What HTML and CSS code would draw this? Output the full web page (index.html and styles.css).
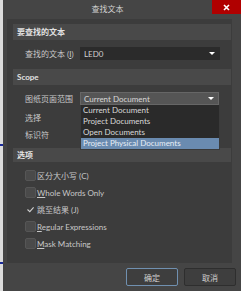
FILE: index.html
```html
<!DOCTYPE html>
<html>
<head>
<meta charset="utf-8">
<link rel="stylesheet" href="styles.css">
</head>
<body>
<div class="screen">
  <div class="strip"><i class="mark m1"></i><i class="mark m2"></i></div>
  <div class="dialog">
    <div class="titlebar">
      <span class="title">查找文本</span>
      <span class="close"><svg width="7" height="7" viewBox="0 0 7 7"><path d="M1 1L6 6M6 1L1 6" stroke="#fff" stroke-width="1.6"/></svg></span>
    </div>
    <div class="panel">
      <div class="band">要查找的文本</div>
      <div class="row r-find">
        <span class="label">查找的文本 (<u>I</u>)</span>
        <div class="combo dark"><span>LED0</span><i class="arrow"></i></div>
      </div>
      <div class="band">Scope</div>
      <div class="row r-scope">
        <span class="label">图纸页面范围</span>
        <div class="combo-wrap">
          <div class="combo light"><span>Current Document</span><i class="arrow"></i></div>
          <ul class="list">
            <li>Current Document</li>
            <li>Project Documents</li>
            <li>Open Documents</li>
            <li class="sel">Project Physical Documents</li>
          </ul>
        </div>
      </div>
      <div class="row r-plain first"><span class="label">选择</span></div>
      <div class="row r-plain"><span class="label">标识符</span></div>
      <div class="band b3">选项</div>
      <div class="checks">
        <div class="check"><i class="box"></i><span>区分大小写 (C)</span></div>
        <div class="check"><i class="box"></i><span><u>W</u>hole Words Only</span></div>
        <div class="check"><i class="box on"><svg width="9" height="9" viewBox="0 0 9 9"><path d="M1.5 4.5L3.8 6.6L7.6 2.4" fill="none" stroke="#d0d0d0" stroke-width="1.1"/></svg></i><span>跳至结果 (J)</span></div>
        <div class="check"><i class="box"></i><span><u>R</u>egular Expressions</span></div>
        <div class="check"><i class="box"></i><span><u>M</u>ask Matching</span></div>
      </div>
    </div>
    <div class="buttons">
      <span class="btn default">确定</span>
      <span class="btn">取消</span>
    </div>
  </div>
</div>
</body>
</html>
```
FILE: styles.css
```css
html, body {
  margin: 0;
  padding: 0;
  background: #444444;
}
body {
  font-family: Lato, "Noto Sans CJK SC", sans-serif;
  font-size: 8px;
  color: #c8c8c8;
}
.screen {
  display: flex;
  width: 241px;
  height: 291px;
  overflow: hidden;
}
.strip {
  width: 3px;
  flex: none;
  background: #dcdcdc;
  display: flex;
  flex-direction: column;
}
.mark {
  display: block;
  height: 2px;
  background: #1a2a9a;
}
.m1 { margin-top: 144px; }
.m2 { margin-top: 116px; }
.dialog {
  flex: 1;
  display: flex;
  flex-direction: column;
  background: #454545;
}
.titlebar {
  height: 19px;
  display: flex;
  align-items: flex-start;
}
.title {
  flex: 1;
  text-align: center;
  line-height: 19px;
  color: #d0d0d0;
}
.close {
  width: 29px;
  height: 14px;
  background: #b00000;
  display: flex;
  align-items: center;
  justify-content: center;
}
.close svg { display: block; }
.panel {
  margin: 0 9px 0 4px;
  background: #3c3c3c;
  padding: 5px 1px 11px 6px;
  position: relative;
}
.band {
  height: 16px;
  line-height: 16px;
  background: #494949;
  padding-left: 4px;
  font-weight: bold;
  color: #e2e2e2;
}
.row {
  display: flex;
  align-items: center;
  padding-left: 12px;
}
.label {
  width: 55px;
  flex: none;
  white-space: nowrap;
}
.r-find { height: 13px; margin: 7px 0 9px; }
.r-scope { height: 13px; margin-top: 7px; }
.combo-wrap {
  position: relative;
  width: 140px;
}
.combo {
  width: 140px;
  height: 13px;
  box-sizing: border-box;
  display: flex;
  align-items: center;
  justify-content: space-between;
  padding: 0 4px 0 3px;
}
.combo.dark {
  background: #2b2b2b;
  border: 1px solid #2b2b2b;
  color: #d0d0d0;
}
.combo.light {
  width: 139px;
  background: #555555;
  border: 1px solid #666666;
  color: #d8d8d8;
}
.arrow {
  width: 0;
  height: 0;
  border-left: 3px solid transparent;
  border-right: 3px solid transparent;
  border-top: 3px solid #ffffff;
}
.list {
  position: absolute;
  left: 0;
  top: 13px;
  width: 140px;
  box-sizing: border-box;
  margin: 0;
  padding: 0;
  list-style: none;
  background: #2a2a2a;
  border: 1px solid #3a3a3a;
  border-top: none;
  z-index: 2;
}
.list li {
  height: 11px;
  line-height: 11px;
  padding-left: 2px;
  color: #d8d8d8;
}
.list li.sel {
  background: #6a8bb0;
  color: #e8eef6;
}
.r-plain { height: 17px; }
.r-plain.first { margin-top: 4px; }
.b3 { margin-top: 5px; height: 14px; line-height: 14px; }
.checks {
  margin-top: 5px;
  padding-left: 12px;
}
.check {
  height: 17px;
  display: flex;
  align-items: center;
}
.box {
  width: 11px;
  height: 11px;
  box-sizing: border-box;
  border-radius: 2px;
  background: #4a4a4a;
  border: 1px solid #565656;
  margin-right: 1px;
  display: flex;
  align-items: center;
  justify-content: center;
}
.box.on {
  background: transparent;
  border-color: transparent;
}
.box svg { display: block; }
.buttons {
  display: flex;
  justify-content: flex-end;
  gap: 6px;
  padding: 5px 5px 0 0;
}
.btn {
  width: 52px;
  height: 18px;
  box-sizing: border-box;
  border: 1px solid #2e2e2e;
  background: #3e3e3e;
  border-radius: 2px;
  display: flex;
  align-items: center;
  justify-content: center;
  color: #d0d0d0;
}
.btn.default {
  border-color: #7090b0;
}
```
